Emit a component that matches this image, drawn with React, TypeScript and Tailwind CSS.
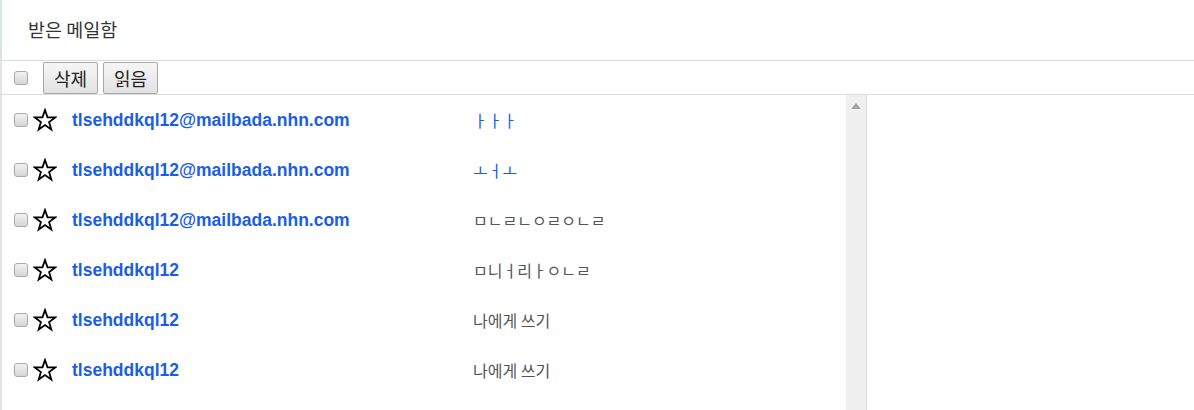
import React from "react";

const rows = [
  { from: "tlsehddkql12@mailbada.nhn.com", subject: "ㅏㅏㅏ", blue: true },
  { from: "tlsehddkql12@mailbada.nhn.com", subject: "ㅗㅓㅗ", blue: true },
  { from: "tlsehddkql12@mailbada.nhn.com", subject: "ㅁㄴㄹㄴㅇㄹㅇㄴㄹ", blue: false },
  { from: "tlsehddkql12", subject: "ㅁ니ㅓ리ㅏㅇㄴㄹ", blue: false },
  { from: "tlsehddkql12", subject: "나에게 쓰기", blue: false },
  { from: "tlsehddkql12", subject: "나에게 쓰기", blue: false },
];

function Box() {
  return (
    <span className="inline-block w-[14px] h-[14px] rounded-[3px] border border-[#a9a9a9] bg-gradient-to-b from-[#f2f2f2] to-[#d6d6d6] shrink-0" />
  );
}

function Star() {
  return (
    <svg width="24" height="24" viewBox="0 0 24 24" className="shrink-0">
      <path
        d="M12 2 L14.5 9.3 L22.2 9.4 L16.1 14.1 L18.3 21.5 L12 17.1 L5.7 21.5 L7.9 14.1 L1.8 9.4 L9.5 9.3 Z"
        fill="none"
        stroke="#000"
        strokeWidth="1.8"
        strokeLinejoin="miter"
      />
    </svg>
  );
}

function Btn({ label }: { label: string }) {
  return (
    <button className="h-[32px] w-[55px] border border-[#a8a8a8] rounded-[2px] bg-gradient-to-b from-[#f6f6f6] to-[#e2e2e2] text-[18px] leading-none text-[#222] font-['Noto_Sans_CJK_KR',sans-serif]">
      {label}
    </button>
  );
}

export default function App() {
  return (
    <div className="w-[1194px] h-[410px] overflow-hidden bg-white font-['Liberation_Sans','Noto_Sans_CJK_KR',sans-serif]">
      <div className="h-[61px] border-l-2 border-[#d6e7e3] flex items-center pl-[26px] border-b border-b-[#dcdcdc]">
        <span className="text-[18.5px] text-[#333] font-['Noto_Sans_CJK_KR',sans-serif]">받은 메일함</span>
      </div>
      <div className="h-[34px] border-b border-[#dcdcdc] flex items-center pl-[12px] border-l-2 border-l-[#e4e4e4]">
        <Box />
        <div className="ml-[15px] flex gap-[5px]">
          <Btn label="삭제" />
          <Btn label="읽음" />
        </div>
      </div>
      <div className="flex h-[315px] border-l-2 border-l-[#e4e4e4]">
        <div className="w-[844px]">
          {rows.map((r, i) => (
            <div key={i} className="h-[50px] flex items-center">
              <div className="w-[471px] flex items-center pl-[12px]">
                <Box />
                <span className="ml-[5px] flex">
                  <Star />
                </span>
                <span className="ml-[15px] text-[17.5px] font-bold text-[#1a5ee6]">{r.from}</span>
              </div>
              <span
                className={
                  "text-[16px] font-['Noto_Sans_CJK_KR',sans-serif] " +
                  (r.blue ? "text-[#1a5ee6]" : "text-[#555]")
                }
              >
                {r.subject}
              </span>
            </div>
          ))}
        </div>
        <div className="w-[21px] bg-[#f0f0f0] border-r border-[#dcdcdc] flex justify-center pt-[8px]">
          <svg width="10" height="6" viewBox="0 0 10 6">
            <path d="M0 6 L5 0 L10 6 Z" fill="#a3a3a3" />
          </svg>
        </div>
      </div>
    </div>
  );
}
